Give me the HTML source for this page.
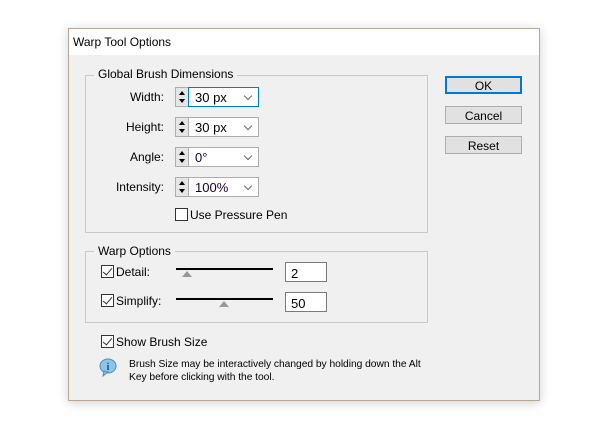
<!DOCTYPE html>
<html><head><meta charset="utf-8"><style>
*{box-sizing:border-box;margin:0;padding:0}
body{width:600px;height:433px;background:#fff;position:relative;overflow:hidden;font-family:"Liberation Sans",sans-serif;font-size:12px;color:#000}
.a{position:absolute}
.dlg{left:68px;top:28px;width:472px;height:373px;border:1px solid #b9a796;background:#f0f0f0;box-shadow:0 2px 10px rgba(0,0,0,.18)}
.title{left:0;top:0;width:470px;height:26px;background:#fff;padding:6px 0 0 4px;font-size:12px}
.grp{border:1px solid #c9c9c9}
.leg{background:#f0f0f0;padding:0 4px}
.lbl{text-align:right;width:80px}
.spin{width:14px;height:20px;border:1px solid #adadad;background:#e6e6e6}
.spin i{position:absolute;left:3px;width:0;height:0;border-left:3px solid transparent;border-right:3px solid transparent}
.dd{width:71px;height:20px;border:1px solid #adadad;background:#fff;padding:2px 0 0 6px;font-size:13px}
.dd:after{content:"";position:absolute;right:7px;top:5px;width:5px;height:5px;border-right:1px solid #666;border-bottom:1px solid #666;transform:rotate(45deg)}
.cb{width:13px;height:13px;border:1px solid #333;background:#fff}
.cb.c:after{content:"";position:absolute;left:3px;top:0px;width:4px;height:8px;border-right:1.5px solid #333;border-bottom:1.5px solid #333;transform:rotate(40deg)}
.btn{width:77px;height:18px;border:1px solid #adadad;background:#e1e1e1;text-align:center;padding-top:2px}
.tb{width:42px;height:20px;border:1px solid #7a7a7a;background:#fff;padding:3px 0 0 5px;font-size:13px}
.sl{height:2px;background:#000;width:97px}
.th{width:0;height:0;border-left:5px solid transparent;border-right:5px solid transparent;border-bottom:6px solid #999}
</style></head><body>
<div class="a dlg">
<div class="a title">Warp Tool Options</div>
</div>
<div class="a grp" style="left:85px;top:75px;width:343px;height:158px"></div>
<div class="a leg" style="left:94px;top:67px">Global Brush Dimensions</div>

<div class="a lbl" style="left:84px;top:90px">Width:</div>
<div class="a spin" style="left:175px;top:87px"><i style="top:3px;border-bottom:4px solid #000"></i><i style="top:11px;border-top:4px solid #000"></i></div>
<div class="a dd" style="left:188px;top:87px;border-color:#0078d7">30 px</div>

<div class="a lbl" style="left:84px;top:120px">Height:</div>
<div class="a spin" style="left:175px;top:117px"><i style="top:3px;border-bottom:4px solid #000"></i><i style="top:11px;border-top:4px solid #000"></i></div>
<div class="a dd" style="left:188px;top:117px">30 px</div>

<div class="a lbl" style="left:84px;top:150px">Angle:</div>
<div class="a spin" style="left:175px;top:147px"><i style="top:3px;border-bottom:4px solid #000"></i><i style="top:11px;border-top:4px solid #000"></i></div>
<div class="a dd" style="left:188px;top:147px;color:#1a0030">0°</div>

<div class="a lbl" style="left:84px;top:180px">Intensity:</div>
<div class="a spin" style="left:175px;top:177px"><i style="top:3px;border-bottom:4px solid #000"></i><i style="top:11px;border-top:4px solid #000"></i></div>
<div class="a dd" style="left:188px;top:177px;color:#1a0030">100%</div>

<div class="a cb" style="left:175px;top:208px"></div>
<div class="a" style="left:190px;top:208px">Use Pressure Pen</div>

<div class="a grp" style="left:85px;top:251px;width:343px;height:72px"></div>
<div class="a leg" style="left:94px;top:244px">Warp Options</div>

<div class="a cb c" style="left:101px;top:265px"></div>
<div class="a" style="left:116px;top:265px">Detail:</div>
<div class="a sl" style="left:176px;top:268px"></div>
<div class="a th" style="left:182px;top:271px"></div>
<div class="a tb" style="left:285px;top:262px">2</div>

<div class="a cb c" style="left:101px;top:294px"></div>
<div class="a" style="left:116px;top:294px">Simplify:</div>
<div class="a sl" style="left:176px;top:298px"></div>
<div class="a th" style="left:219px;top:301px"></div>
<div class="a tb" style="left:285px;top:292px">50</div>

<div class="a cb c" style="left:101px;top:335px"></div>
<div class="a" style="left:116px;top:335px">Show Brush Size</div>

<svg class="a" style="left:99px;top:358px" width="20" height="20" viewBox="0 0 20 20"><ellipse cx="9" cy="8" rx="8" ry="7" fill="#8cc4ea" stroke="#4d8fbf"/><path d="M5 13 L4 18 L9 14Z" fill="#8cc4ea" stroke="#4d8fbf"/><text x="9" y="12" font-size="10" font-weight="bold" text-anchor="middle" fill="#1d4a7a" font-family="Liberation Serif,serif">i</text></svg>
<div class="a" style="left:129px;top:358px;font-size:10.3px;line-height:13px;letter-spacing:-0.05px">Brush Size may be interactively changed by holding down the Alt<br>Key before clicking with the tool.</div>

<div class="a btn" style="left:445px;top:76px;border:2px solid #0078d7;padding-top:1px">OK</div>
<div class="a btn" style="left:445px;top:106px">Cancel</div>
<div class="a btn" style="left:445px;top:136px">Reset</div>
</body></html>
